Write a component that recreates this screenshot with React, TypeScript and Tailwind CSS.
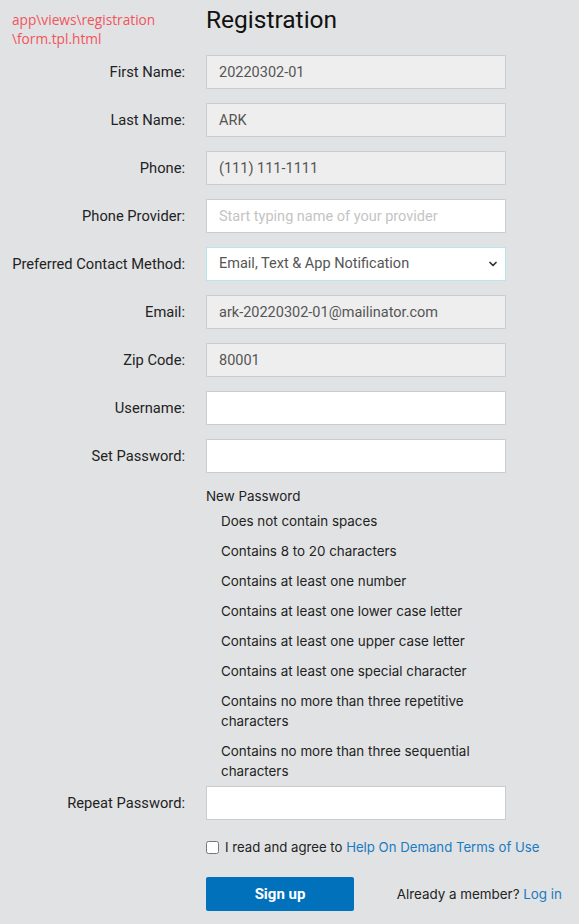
import { ChevronDown } from "lucide-react";

type FieldProps = {
  label: string;
  value?: string;
  placeholder?: string;
  disabled?: boolean;
  type?: string;
};

const labelCls =
  "flex h-[34px] items-center justify-end whitespace-nowrap text-[14.7px] text-[#222] font-['Roboto',sans-serif]";

const Field = ({ label, value, placeholder, disabled, type = "text" }: FieldProps) => (
  <>
    <label className={labelCls}>{label}</label>
    <input
      type={type}
      defaultValue={value}
      placeholder={placeholder}
      readOnly={disabled}
      className={
        "h-[34px] w-full border px-3 text-[14.5px] font-['Roboto',sans-serif] outline-none placeholder:text-[#c4c4c4] " +
        (disabled ? "border-[#cccccc] bg-[#eeeeee] text-[#555]" : "border-[#cccccc] bg-white text-[#555]")
      }
    />
  </>
);

const rules = [
  "Does not contain spaces",
  "Contains 8 to 20 characters",
  "Contains at least one number",
  "Contains at least one lower case letter",
  "Contains at least one upper case letter",
  "Contains at least one special character",
  "Contains no more than three repetitive characters",
  "Contains no more than three sequential characters",
];

const App = () => {
  return (
    <div className="min-h-[924px] w-full bg-[#e1e2e4]">
      <div className="grid grid-cols-[185px_300px] gap-x-[21px] gap-y-[14px] pt-[5px]">
        <div className="-mb-[7px] pl-[12px] pt-[5px] text-[13.7px] leading-[19px] text-[#f2545b] font-['Open_Sans',sans-serif]">
          app\views\registration
          <br />
          \form.tpl.html
        </div>
        <h1 className="-mb-[7px] pt-[1px] text-[24.5px] leading-[28px] text-[#111] font-['Roboto',sans-serif]">
          Registration
        </h1>

        <Field label="First Name:" value="20220302-01" disabled />
        <Field label="Last Name:" value="ARK" disabled />
        <Field label="Phone:" value="(111) 111-1111" disabled />
        <Field label="Phone Provider:" placeholder="Start typing name of your provider" />

        <label className={labelCls}>Preferred Contact Method:</label>
        <div className="relative h-[34px]">
          <select className="h-full w-full appearance-none border border-[#b8e6f0] bg-white pl-3 text-[14.5px] text-[#555] outline-none font-['Roboto',sans-serif]">
            <option>Email, Text &amp; App Notification</option>
          </select>
          <ChevronDown
            className="pointer-events-none absolute right-[7px] top-1/2 h-[12px] w-[12px] -translate-y-1/2 text-[#333]"
            strokeWidth={3.5}
          />
        </div>

        <Field label="Email:" value="ark-20220302-01@mailinator.com" disabled />
        <Field label="Zip Code:" value="80001" disabled />
        <Field label="Username:" />
        <Field label="Set Password:" type="password" />

        <div />
        <div className="-mb-[14px] -mt-[1px] text-[13.4px] leading-[20px] text-[#222] font-['Inter',sans-serif]">
          <p>New Password</p>
          <ul>
            {rules.map((r) => (
              <li key={r} className="py-[5px] pl-[15px]">
                {r}
              </li>
            ))}
          </ul>
        </div>

        <Field label="Repeat Password:" type="password" />

        <div />
        <label className="mt-[3px] flex items-center gap-[6px] whitespace-nowrap text-[13.2px] leading-[20px] text-[#222] font-['Inter',sans-serif]">
          <input type="checkbox" className="h-[13px] w-[13px] rounded-[2px]" />
          <span>
            I read and agree to{" "}
            <a href="#" className="text-[#1b7bc1]">
              Help On Demand Terms of Use
            </a>
          </span>
        </label>

        <div />
        <div className="mt-[6px] flex w-[356px] items-center justify-between">
          <button className="h-[34px] w-[148px] rounded-[2px] bg-[#0171bb] text-[15px] font-bold text-white font-['Roboto',sans-serif]">
            Sign up
          </button>
          <p className="whitespace-nowrap text-[13.4px] text-[#222] font-['Inter',sans-serif]">
            Already a member?{" "}
            <a href="#" className="text-[#1b7bc1]">
              Log in
            </a>
          </p>
        </div>
      </div>
    </div>
  );
};

export default App;
